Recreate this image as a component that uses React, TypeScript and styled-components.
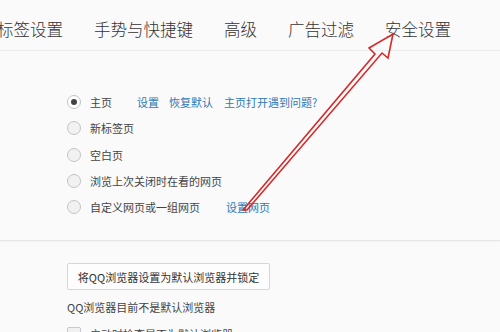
import React from "react";
import styled, { createGlobalStyle } from "styled-components";

const GlobalStyle = createGlobalStyle`
  html, body {
    margin: 0;
    padding: 0;
    background: #fafafa;
    overflow: hidden;
  }
  body {
    font-family: "Noto Sans CJK SC", "Liberation Sans", sans-serif;
  }
`;

const Page = styled.div`
  position: relative;
  width: 500px;
  height: 332px;
  overflow: hidden;
  background: #fafafa;
`;

const TabBar = styled.div`
  display: flex;
  align-items: center;
  gap: 31px;
  height: 50px;
  margin-left: -3px;
  border-bottom: 1px solid #ececec;
`;

const Tab = styled.div`
  font-size: 16.5px;
  font-weight: 300;
  color: #333;
  white-space: nowrap;
  line-height: 22px;
  padding-top: 8px;
`;

const Section = styled.div`
  display: flex;
  flex-direction: column;
  padding: 38px 0 0 67px;
  height: 151px;
  border-bottom: 1px solid #e6e6e6;
  box-shadow: 0 1px 2px rgba(0, 0, 0, 0.04);
`;

const OptionRow = styled.div`
  display: flex;
  align-items: center;
  height: 26.3px;
`;

const Radio = styled.span<{ $checked?: boolean }>`
  box-sizing: border-box;
  width: 14px;
  height: 14px;
  border-radius: 50%;
  border: 1px solid #c4c4c4;
  background: ${(p) => (p.$checked ? "#fff" : "#f1f1f1")};
  display: flex;
  align-items: center;
  justify-content: center;
  margin-right: 9px;
  &::after {
    content: "";
    display: ${(p) => (p.$checked ? "block" : "none")};
    width: 6px;
    height: 6px;
    border-radius: 50%;
    background: #444;
  }
`;

const Label = styled.span`
  font-size: 11px;
  color: #444;
  white-space: nowrap;
`;

const Link = styled.span<{ $offset: number }>`
  font-size: 11px;
  color: #2b78b7;
  white-space: nowrap;
  margin-left: ${(p) => p.$offset}px;
`;

const DefaultBlock = styled.div`
  display: flex;
  flex-direction: column;
  align-items: flex-start;
  padding: 22px 0 0 67px;
`;

const Button = styled.div`
  box-sizing: border-box;
  width: 203px;
  height: 27px;
  border: 1px solid #d6d6d6;
  background: #fdfdfd;
  border-radius: 2px;
  display: flex;
  align-items: center;
  justify-content: center;
  font-size: 11px;
  color: #333;
`;

const Status = styled.div`
  font-size: 11px;
  color: #444;
  margin-top: 10px;
  line-height: 14px;
`;

const CheckRow = styled.div`
  display: flex;
  align-items: center;
  margin-top: 12px;
`;

const Checkbox = styled.span`
  box-sizing: border-box;
  width: 14px;
  height: 14px;
  border: 1px solid #c8c8c8;
  background: #f1f1f1;
  border-radius: 2px;
  margin-right: 9px;
`;

const ArrowLayer = styled.svg`
  position: absolute;
  left: 0;
  top: 0;
  pointer-events: none;
`;

const options = [
  { label: "主页", checked: true },
  { label: "新标签页" },
  { label: "空白页" },
  { label: "浏览上次关闭时在看的网页" },
  { label: "自定义网页或一组网页" },
];

const App: React.FC = () => {
  return (
    <Page>
      <GlobalStyle />
      <TabBar>
        <Tab>标签设置</Tab>
        <Tab>手势与快捷键</Tab>
        <Tab>高级</Tab>
        <Tab>广告过滤</Tab>
        <Tab>安全设置</Tab>
      </TabBar>
      <Section>
        {options.map((o, i) => (
          <OptionRow key={o.label}>
            <Radio $checked={o.checked} />
            <Label>{o.label}</Label>
            {i === 0 && (
              <>
                <Link $offset={25}>设置</Link>
                <Link $offset={10}>恢复默认</Link>
                <Link $offset={11}>主页打开遇到问题?</Link>
              </>
            )}
            {i === 4 && <Link $offset={26}>设置网页</Link>}
          </OptionRow>
        ))}
      </Section>
      <DefaultBlock>
        <Button>将QQ浏览器设置为默认浏览器并锁定</Button>
        <Status>QQ浏览器目前不是默认浏览器</Status>
        <CheckRow>
          <Checkbox />
          <Label>启动时检查是否为默认浏览器</Label>
        </CheckRow>
      </DefaultBlock>
      <ArrowLayer width="500" height="332" viewBox="0 0 500 332">
        <polygon
          points="243,210 375,54 369,48 393,34 388,58 382,53 247,210"
          fill="none"
          stroke="#d42a2a"
          strokeWidth="1.6"
          strokeLinejoin="miter"
        />
      </ArrowLayer>
    </Page>
  );
};

export default App;
